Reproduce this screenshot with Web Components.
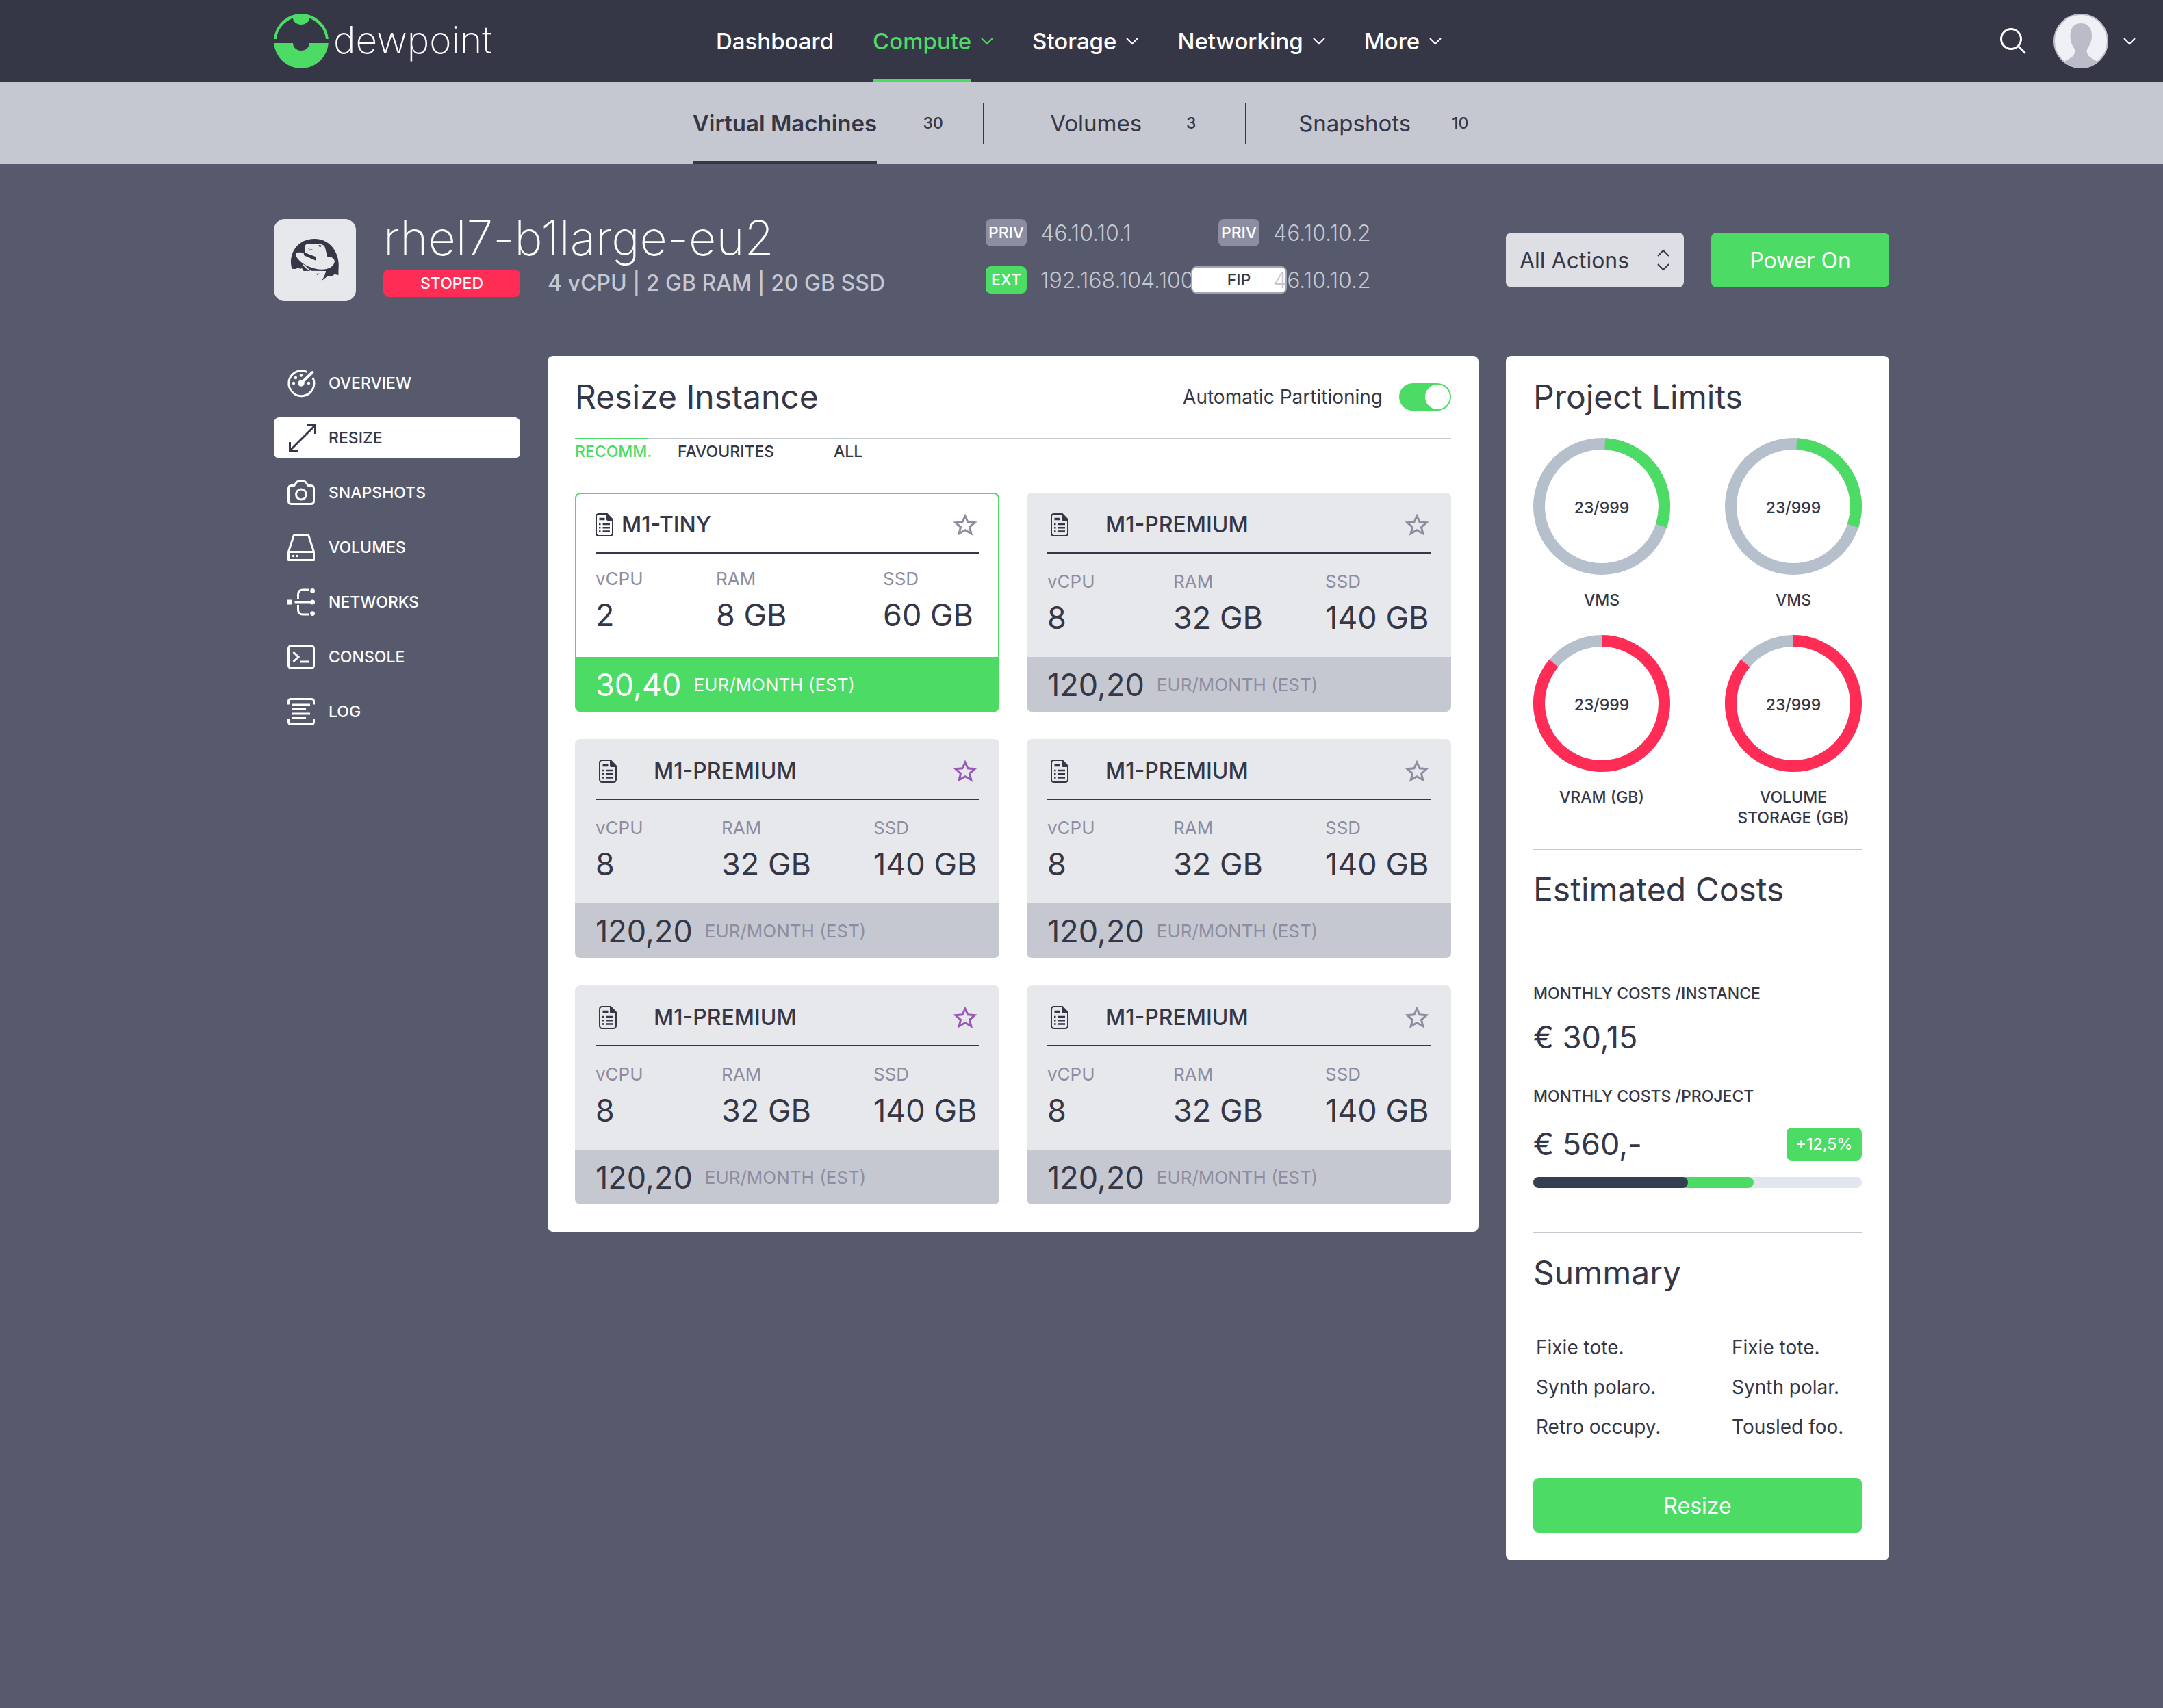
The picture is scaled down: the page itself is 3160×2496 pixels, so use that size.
<!DOCTYPE html>
<html lang="en">
<head>
<meta charset="utf-8">
<meta name="viewport" content="width=device-width, initial-scale=1">
<title>dewpoint – Resize Instance</title>
<style>
  :root {
    --ink: #363746; --slate: #57596c; --mist: #c5c8d1; --cloud: #e7e8ec;
    --lilac: #8c8da0; --green: #4cdb64; --red: #ff2d55; --violet: #9b59b6;
    --xs: 23px; --sm: 26px; --body: 28px; --md: 32px; --nav: 33px; --lg: 45px; --h2: 48px; --xl: 70px;
    --content: 2360px;
  }
  body {
    margin: 0; min-height: 100vh; background: var(--slate); color: var(--ink);
    font-family: Inter, "Noto Sans", "Liberation Sans", sans-serif;
    font-size: var(--body);
  }
  main { max-width: var(--content); margin: 0 auto; padding-bottom: 80px; }
  .columns { display: grid; grid-template-columns: 360px minmax(0, 1fr) 560px; gap: 40px; align-items: start; }
</style>
</head>
<body>
<dp-header></dp-header>
<dp-subnav></dp-subnav>
<main>
  <dp-hero name="rhel7-b1large-eu2"></dp-hero>
  <div class="columns">
    <dp-sidebar></dp-sidebar>
    <dp-resize-panel>
      <dp-flavor name="M1-TINY" cpu="2" ram="8 GB" ssd="60 GB" price="30,40" selected></dp-flavor>
      <dp-flavor name="M1-PREMIUM" cpu="8" ram="32 GB" ssd="140 GB" price="120,20"></dp-flavor>
      <dp-flavor name="M1-PREMIUM" cpu="8" ram="32 GB" ssd="140 GB" price="120,20" favourite></dp-flavor>
      <dp-flavor name="M1-PREMIUM" cpu="8" ram="32 GB" ssd="140 GB" price="120,20"></dp-flavor>
      <dp-flavor name="M1-PREMIUM" cpu="8" ram="32 GB" ssd="140 GB" price="120,20" favourite></dp-flavor>
      <dp-flavor name="M1-PREMIUM" cpu="8" ram="32 GB" ssd="140 GB" price="120,20"></dp-flavor>
    </dp-resize-panel>
    <dp-project-panel>
      <dp-gauge slot="gauges" value="23/999" from="3" to="108">VMS</dp-gauge>
      <dp-gauge slot="gauges" value="23/999" from="3" to="108">VMS</dp-gauge>
      <dp-gauge slot="gauges" value="23/999" from="0" to="310" critical>VRAM (GB)</dp-gauge>
      <dp-gauge slot="gauges" value="23/999" from="0" to="310" critical>VOLUME<br>STORAGE (GB)</dp-gauge>
    </dp-project-panel>
  </div>
</main>

<script>
const BASE = `
  *, *::before, *::after { box-sizing: border-box; }
  :host { display: block; }
  a { color: inherit; text-decoration: none; }
  h1, h2, h3, p, ul, dl, dd, dt { margin: 0; padding: 0; font-weight: 400; }
  ul { list-style: none; }
  svg { display: block; overflow: visible; }
  button, select, input { font: inherit; color: inherit; margin: 0; }
  button { border: 0; background: none; padding: 0; cursor: pointer; }
`;

class DpElement extends HTMLElement {
  connectedCallback() {
    if (this.shadowRoot) return;
    const t = document.createElement('template');
    t.innerHTML = `<style>${BASE}${this.css()}</style>${this.html()}`;
    this.attachShadow({ mode: 'open' }).append(t.content.cloneNode(true));
  }
  css() { return ''; }
  html() { return ''; }
  attr(n) { return this.getAttribute(n) || ''; }
}

const ICONS = {
  logo: [80, 80, `<g fill="#4cdb64"><path d="M.11 37A40 40 0 0 1 79.890 37H76C75 23 65 12 52 6.600C52 12 46.500 16 40 16S28 12 28 6.600C15 12 5 23 4 37Z"/><path d="M.11 43H28C28 49 33 54 40 54S52 49 52 43H79.890A40 40 0 0 1 .11 43Z"/></g>`],
  chevron: [18, 10, `<path d="M1 1L9 9L17 1" fill="none" stroke="currentColor" stroke-width="2"/>`],
  updown: [18, 30, `<path d="M1 9L9 1L17 9M1 21L9 29L17 21" fill="none" stroke="currentColor" stroke-width="2"/>`],
  search: [38, 38, `<g fill="none" stroke="currentColor" stroke-width="3"><circle cx="16" cy="16" r="14.500"/><path d="M26.500 26.500L36 36" stroke-linecap="round"/></g>`],
  avatar: [80, 80, `<clipPath id="c"><circle cx="40" cy="40" r="40"/></clipPath><g clip-path="url(#c)"><circle cx="40" cy="40" r="40" fill="#f0f1f6"/><path d="M40 14C50 14 56 21 56 32C56 41 52.500 47 49 52C48 58 50 61 54 64L64 70V80H16V70L26 64C30 61 32 58 31 52C27.500 47 24.500 41 24.500 32C24.500 21 30 14 40 14Z" fill="#bbbcc7"/></g><circle cx="40" cy="40" r="39" fill="none" stroke="#bbbcc7" stroke-width="2"/>`],
  overview: [40, 40, `<path d="M28.500 3.500A18.500 18.500 0 1 0 37 12" fill="none" stroke="currentColor" stroke-width="3"/><g fill="currentColor"><circle cx="9" cy="20" r="2.200"/><circle cx="12" cy="12" r="2.200"/><circle cx="20" cy="8.600" r="2.200"/><circle cx="31" cy="20" r="2.200"/><circle cx="20" cy="20" r="4.700"/></g><path d="M20 20L36.500 4" stroke="currentColor" stroke-width="4" stroke-linecap="round"/>`],
  resize: [40, 40, `<path d="M4 38L40 2M28 1.500H40.500V14M3.500 26V38.500H16" fill="none" stroke="currentColor" stroke-width="3"/>`],
  snapshots: [40, 40, `<g fill="none" stroke="currentColor" stroke-width="3" stroke-linejoin="round"><path d="M6 9.500H10L13 5Q14 3.500 16 3.500H24Q26 3.500 27 5L30 9.500H34Q38.500 9.500 38.500 14V32Q38.500 36.500 34 36.500H6Q1.500 36.500 1.500 32V14Q1.500 9.500 6 9.500Z"/><circle cx="20" cy="22.500" r="7.500"/></g>`],
  volumes: [40, 40, `<path d="M1.500 26.500L9 3Q9.500 1.500 11 1.500H29Q30.500 1.500 31 3L38.500 26.500V38.500H1.500ZM1.500 26.500H38.500" fill="none" stroke="currentColor" stroke-width="3" stroke-linejoin="round"/><circle cx="8.500" cy="32.500" r="1.800" fill="currentColor"/><circle cx="13.800" cy="32.500" r="1.800" fill="currentColor"/>`],
  networks: [40, 40, `<g fill="none" stroke="currentColor" stroke-width="3"><path d="M10.500 20H34M15.500 16V9Q15.500 2 22.500 2H32M15.500 24V31Q15.500 38 22.500 38H32"/></g><g fill="currentColor"><path d="M0 16.500H7V23.500H0Z"/><circle cx="36.600" cy="3.400" r="3.400"/><circle cx="36.600" cy="20" r="3.400"/><circle cx="36.600" cy="36.600" r="3.400"/></g>`],
  console: [40, 40, `<g fill="none" stroke="currentColor" stroke-width="3"><rect x="1.500" y="3.500" width="37" height="33" rx="4"/><path d="M8.500 13L16 20L8.500 27M18 27H31"/></g>`],
  log: [40, 40, `<path d="M1.500 9.500V5Q1.500 1.500 5 1.500H35Q38.500 1.500 38.500 5V9.500M1.500 30.500V35Q1.500 38.500 5 38.500H35Q38.500 38.500 38.500 35V30.500M7 10H33M7 16.500H27M7 23H33M7 29.500H27" fill="none" stroke="currentColor" stroke-width="3"/>`],
  doc: [26, 34, `<path d="M16.500 1H5Q1 1 1 5V29Q1 33 5 33H21Q25 33 25 29V10" fill="none" stroke="currentColor" stroke-width="2"/><path d="M16 0H17.500L26 9V11H18Q16 11 16 9Z" fill="currentColor"/><path d="M5.500 8.500H13.500" stroke="currentColor" stroke-width="3.400"/><path d="M5 16H7.500M10.500 16H21M5 21.300H7.500M10.500 21.300H21M5 26.500H7.500M10.500 26.500H21" stroke="currentColor" stroke-width="2.600"/>`],
  star: [32, 32, `<path d="M16 3L20 11.800L30 12.700L22.500 19.300L24.800 28.800L16 23.800L7.200 28.800L9.500 19.300L2 12.700L12 11.800Z" fill="none" stroke="currentColor" stroke-width="3"/>`],
  redhat: [120, 120, `<g transform="translate(-20 -30) scale(.612 .3333)"><path fill="#363746" d="M76 308C66 245 88 177 130 177C170 177 192 245 187 315V336L178 332L172 340L160 342L146 362L153 342L157 318L120 317L105 290L98 308L90 305L84 309Z"/><path fill="#e7e8ec" d="M108 205C114 192 124 204 132 200C144 195 153 203 155 215L161 258C169 252 178 262 178 277C175 302 162 312 146 311C117 309 88 275 85 245C85 235 96 234 104 240L105 250L134 273L133 256L107 238Z"/><path fill="#363746" d="M114 218L119 224L126 222L119 229ZM140 204L147 206L144 214L140 210Z"/><path fill="#e7e8ec" d="M98 308L103 288L122 318L157 318L153 342L140 352H85V310Z"/><path fill="#363746" d="M102 290L108 305L120 317L104 318L99 304ZM132 330L142 329L137 336Z"/></g>`],
};

customElements.define('dp-icon', class extends DpElement {
  css() { return `:host { flex: none; }`; }
  html() {
    const [w, h, body] = ICONS[this.attr('name')];
    return `<svg width="${w}" height="${h}" viewBox="0 0 ${w} ${h}" aria-hidden="true">${body}</svg>`;
  }
});

customElements.define('dp-header', class extends DpElement {
  css() { return `
    header { display: flex; align-items: center; height: 120px; background: var(--ink); color: #fff;
      padding-left: max(40px, calc((100% - var(--content)) / 2)); padding-right: 40px; }
    .brand { display: flex; align-items: center; gap: 7px; width: 646px; font-size: 55px; font-weight: 200; line-height: 72px; }
    .brand span { padding-bottom: 4px; }
    nav { display: flex; gap: 57px; font-size: var(--nav); font-weight: 500; }
    nav a { display: flex; align-items: center; gap: 14px; height: 120px; }
    nav span { display: flex; align-items: center; height: 120px; padding-top: 4px; border-bottom: 4px solid transparent; }
    nav .on { color: var(--green); }
    nav .on span { border-color: var(--green); }
    .tools { display: flex; align-items: center; margin-left: auto; }
    .search { margin-right: 40px; }
    .account { display: flex; align-items: center; gap: 22px; }
  `; }
  html() {
    const items = ['Dashboard', 'Compute', 'Storage', 'Networking', 'More'];
    return `<header>
      <a class="brand" href="#"><dp-icon name="logo"></dp-icon><span>dewpoint</span></a>
      <nav>${items.map((t, i) => `<a href="#" class="${i === 1 ? 'on' : ''}"><span>${t}</span>${i ? '<dp-icon name="chevron"></dp-icon>' : ''}</a>`).join('')}</nav>
      <div class="tools">
        <button class="search" aria-label="Search"><dp-icon name="search"></dp-icon></button>
        <button class="account" aria-label="Account"><dp-icon name="avatar"></dp-icon><dp-icon name="chevron"></dp-icon></button>
      </div>
    </header>`;
  }
});

customElements.define('dp-subnav', class extends DpElement {
  css() { return `
    nav { display: flex; justify-content: center; align-items: center; height: 120px; padding-left: 6px; background: var(--mist); font-size: var(--nav); }
    a { display: flex; align-items: center; gap: 51px; height: 120px; }
    span { display: flex; align-items: center; height: 120px; padding-top: 4px; border-bottom: 4px solid transparent; }
    .on { gap: 61px; }
    .on span { font-weight: 600; border-color: var(--ink); }
    small { width: 42px; text-align: center; font-size: var(--xs); font-weight: 500; }
    i { width: 2px; height: 60px; margin: 0 76px 0 58px; background: var(--ink); }
    .on + i { margin: 0 96px 0 52px; }
  `; }
  html() { return `<nav>
      <a href="#" class="on"><span>Virtual Machines</span><small>30</small></a><i></i>
      <a href="#"><span>Volumes</span><small>3</small></a><i></i>
      <a href="#"><span>Snapshots</span><small>10</small></a>
    </nav>`; }
});

customElements.define('dp-badge', class extends DpElement {
  css() { return `
    :host { display: flex; align-items: center; justify-content: center; height: 40px; border-radius: 8px;
      background: var(--lilac); color: #fff; font-size: var(--xs); font-weight: 500; }
    :host([kind=stopped]) { background: var(--red); }
    :host([kind=ext]) { background: var(--green); }
    :host([kind=fip]) { background: #fff; color: var(--ink); border: 2px solid #a3a4b4; }
  `; }
  html() { return `<slot></slot>`; }
});

customElements.define('dp-hero', class extends DpElement {
  css() { return `
    section { display: grid; grid-template-columns: 120px minmax(0, 1fr) 760px 560px; padding: 80px 0; }
    .os { width: 120px; height: 120px; border-radius: 16px; background: var(--cloud); }
    .info { padding-left: 40px; }
    h1 { font-size: var(--xl); font-weight: 200; line-height: 56px; color: #fff; white-space: nowrap; }
    .state { display: flex; align-items: center; gap: 40px; margin-top: 18px; font-size: var(--md); font-weight: 500; line-height: 40px; color: var(--mist); white-space: nowrap; }
    .state dp-badge { width: 200px; }
    .ips { display: grid; grid-template-columns: 340px 340px; grid-auto-rows: 40px; row-gap: 29px; align-content: start;
      font-size: var(--md); font-weight: 300; color: var(--mist); }
    .ips li { display: flex; align-items: center; gap: 20px; }
    .ips dp-badge { width: 60px; }
    .ips dp-badge[kind=fip] { width: 140px; margin: 0 -40px; }
    .ips span { position: relative; }
    .actions { display: grid; grid-template-columns: 1fr 1fr; gap: 40px; padding-top: 20px; font-size: var(--md); }
    label { display: grid; align-items: center; height: 80px; color: var(--ink); }
    label > * { grid-area: 1 / 1; }
    select { width: 100%; height: 80px; padding: 0 20px; border: 0; border-radius: 8px; appearance: none; background: #dddfe4; }
    label dp-icon { justify-self: end; margin-right: 21px; pointer-events: none; }
    .power { height: 80px; border-radius: 8px; background: var(--green); color: #fff; }
  `; }
  html() { return `<section>
      <div class="os"><dp-icon name="redhat"></dp-icon></div>
      <div class="info">
        <h1>${this.attr('name')}</h1>
        <div class="state"><dp-badge kind="stopped">STOPED</dp-badge><span>4 vCPU | 2 GB RAM | 20 GB SSD</span></div>
      </div>
      <ul class="ips">
        <li><dp-badge>PRIV</dp-badge><span>46.10.10.1</span></li>
        <li><dp-badge>PRIV</dp-badge><span>46.10.10.2</span></li>
        <li><dp-badge kind="ext">EXT</dp-badge>192.168.104.100</li>
        <li><dp-badge kind="fip">FIP</dp-badge><span>46.10.10.2</span></li>
      </ul>
      <div class="actions">
        <label><select aria-label="Actions"><option>All Actions</option></select><dp-icon name="updown"></dp-icon></label>
        <button class="power">Power On</button>
      </div>
    </section>`; }
});

customElements.define('dp-sidebar', class extends DpElement {
  css() { return `
    nav { display: grid; gap: 20px; padding-top: 10px; }
    a { display: flex; align-items: center; gap: 20px; height: 60px; padding: 0 20px; border-radius: 8px;
      color: #fff; font-size: var(--xs); font-weight: 500; }
    .on { background: #fff; color: var(--ink); }
  `; }
  html() {
    const items = ['overview', 'resize', 'snapshots', 'volumes', 'networks', 'console', 'log'];
    return `<nav>${items.map(n => `<a href="#" class="${n === 'resize' ? 'on' : ''}"><dp-icon name="${n}"></dp-icon>${n.toUpperCase()}</a>`).join('')}</nav>`;
  }
});

customElements.define('dp-resize-panel', class extends DpElement {
  css() { return `
    :host { padding: 40px; border-radius: 8px; background: #fff; }
    header { display: flex; align-items: center; justify-content: space-between; height: 40px; margin-bottom: 40px; }
    h2 { font-size: var(--h2); line-height: 40px; }
    label { display: flex; align-items: center; gap: 24px; }
    input { appearance: none; width: 76px; height: 40px; border-radius: 20px; background: var(--green);
      display: flex; align-items: center; justify-content: flex-end; padding: 2px; }
    input::before { content: ""; width: 36px; height: 36px; border-radius: 50%; background: #fff; }
    .tabs { display: grid; grid-template-columns: 106px 184px auto; justify-content: start; gap: 44px; margin-bottom: 42px;
      border-top: 2px solid var(--mist); font-size: var(--xs); font-weight: 500; line-height: 36px; white-space: nowrap; }
    .tabs a.on { margin-top: -2px; border-top: 2px solid var(--green); color: var(--green); }
    .grid { display: grid; grid-template-columns: 1fr 1fr; gap: 40px; }
  `; }
  html() { return `
    <header><h2>Resize Instance</h2><label>Automatic Partitioning<input type="checkbox" role="switch" checked></label></header>
    <nav class="tabs"><a class="on" href="#">RECOMM.</a><a href="#">FAVOURITES</a><a href="#">ALL</a></nav>
    <div class="grid"><slot></slot></div>`; }
});

customElements.define('dp-flavor', class extends DpElement {
  css() { return `
    :host { border-radius: 8px; overflow: hidden; background: var(--cloud); --foot: var(--mist); --unit: var(--lilac);
      --cols: 184px 222px auto; }
    :host([selected]) { background: #fff; outline: 2px solid var(--green); outline-offset: -2px; --foot: var(--green); --unit: #fff;
      --cols: 176px 244px auto; }
    header { display: flex; align-items: center; height: 83px; margin: 6px 30px 0; border-bottom: 2px solid var(--ink); }
    header dp-icon[name=doc] { margin: 0 54px 0 5px; }
    :host([selected]) header dp-icon[name=doc] { margin: 0 12px 0 0; }
    h3 { font-size: var(--md); font-weight: 500; }
    button { margin: 0 4px 0 auto; color: var(--lilac); }
    :host([favourite]) button { color: var(--violet); }
    dl { display: grid; grid-template-columns: var(--cols); height: 151px; margin: 0 30px; padding-top: 21px; white-space: nowrap; }
    :host([selected]) dl { padding-top: 17px; }
    dt { font-size: var(--sm); line-height: 40px; color: var(--lilac); }
    dd { margin-top: 6px; font-size: var(--lg); line-height: 54px; }
    footer { display: flex; align-items: center; gap: 18px; height: 80px; padding: 0 30px; background: var(--foot); color: var(--unit); font-size: var(--sm); }
    strong { font-size: var(--lg); font-weight: 400; color: var(--ink); }
    :host([selected]) strong { color: #fff; }
  `; }
  html() { return `
    <header><dp-icon name="doc"></dp-icon><h3>${this.attr('name')}</h3><button aria-label="Favourite"><dp-icon name="star"></dp-icon></button></header>
    <dl>
      <div><dt>vCPU</dt><dd>${this.attr('cpu')}</dd></div>
      <div><dt>RAM</dt><dd>${this.attr('ram')}</dd></div>
      <div><dt>SSD</dt><dd>${this.attr('ssd')}</dd></div>
    </dl>
    <footer><strong>${this.attr('price')}</strong><span>EUR/MONTH (EST)</span></footer>`; }
});

customElements.define('dp-gauge', class extends DpElement {
  css() { return `
    :host { font-size: var(--xs); font-weight: 500; line-height: 30px; text-align: center; --arc: var(--green); }
    :host([critical]) { --arc: var(--red); }
    .ring { display: grid; place-items: center; width: 200px; height: 200px; margin-bottom: 22px; }
    .ring > * { grid-area: 1 / 1; }
    .ring span { padding-top: 4px; }
    circle, path { fill: none; stroke-width: 17; }
    circle { stroke: #b6bfcc; }
    path { stroke: var(--arc); }
  `; }
  html() {
    const at = d => { const a = d * Math.PI / 180; return `${100 + 91.5 * Math.sin(a)} ${100 - 91.5 * Math.cos(a)}`; };
    const a = +this.attr('from'), b = +this.attr('to');
    return `<div class="ring"><svg width="200" height="200" viewBox="0 0 200 200"><circle cx="100" cy="100" r="91.500"/><path d="M${at(a)}A91.500 91.500 0 ${b - a > 180 ? 1 : 0} 1 ${at(b)}"/></svg><span>${this.attr('value')}</span></div><slot></slot>`;
  }
});

customElements.define('dp-project-panel', class extends DpElement {
  css() { return `
    :host { padding: 40px; border-radius: 8px; background: #fff; }
    h2 { font-size: var(--h2); line-height: 40px; }
    section + section { margin-top: 30px; padding-top: 38px; border-top: 2px solid var(--mist); }
    section + section + section { margin-top: 64px; }
    .gauges { display: grid; grid-template-columns: 200px 200px; justify-content: space-between; row-gap: 36px; margin-top: 40px; }
    h3 { font-size: var(--xs); font-weight: 500; line-height: 30px; }
    h2 + h3 { margin-top: 117px; }
    .cost { font-size: var(--lg); line-height: 48px; }
    h3 + .cost { margin: 25px 0 47px; }
    .row { display: flex; justify-content: space-between; align-items: center; margin: 31px 0 24px; }
    .row dp-badge { width: 110px; height: 48px; background: var(--green); }
    .bar { display: grid; height: 16px; border-radius: 8px; background: #e2e6ee; }
    .bar i { grid-area: 1 / 1; border-radius: 8px; }
    .bar .next { width: 67%; background: var(--green); }
    .bar .now { width: 47%; background: #344052; }
    ul { display: grid; grid-template-columns: 286px auto; justify-content: start; margin: 60px 0 46px; padding-left: 4px; line-height: 58px; white-space: nowrap; }
    button { width: 100%; height: 80px; border-radius: 8px; background: var(--green); color: #fff; font-size: var(--md); }
  `; }
  html() { return `
    <section><h2>Project Limits</h2><div class="gauges"><slot name="gauges"></slot></div></section>
    <section><h2>Estimated Costs</h2>
      <h3>MONTHLY COSTS /INSTANCE</h3><p class="cost">€ 30,15</p>
      <h3>MONTHLY COSTS /PROJECT</h3>
      <div class="row"><p class="cost">€ 560,-</p><dp-badge>+12,5%</dp-badge></div>
      <div class="bar"><i class="next"></i><i class="now"></i></div>
    </section>
    <section><h2>Summary</h2>
      <ul><li>Fixie tote.</li><li>Fixie tote.</li><li>Synth polaro.</li><li>Synth polar.</li><li>Retro occupy.</li><li>Tousled foo.</li></ul>
      <button>Resize</button>
    </section>`; }
});
</script>
</body>
</html>
